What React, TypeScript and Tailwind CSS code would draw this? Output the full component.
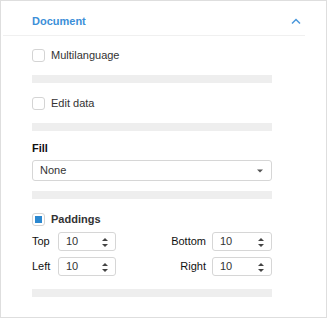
import React from "react";

function Checkbox({ checked }: { checked?: boolean }) {
  return (
    <div className="w-[13px] h-[13px] rounded-[3px] border border-[#d4d4d4] bg-white flex items-center justify-center shrink-0">
      {checked && <div className="w-[7px] h-[7px] bg-[#2b88d0]" />}
    </div>
  );
}

function Bar({ className = "" }: { className?: string }) {
  return <div className={`w-[240px] h-[8px] bg-[#eeeeee] ${className}`} />;
}

function Spin({ value, w }: { value: string; w: string }) {
  return (
    <div className={`${w} h-[19px] rounded-[3px] border border-[#d6d6d6] bg-white flex items-center justify-between pl-[7px] pr-[7px]`}>
      <span className="text-[11px] text-[#333] leading-none">{value}</span>
      <svg width="6" height="11" viewBox="0 0 6 11" className="mt-[1px]">
        <polygon points="3,1 6,4 0,4" fill="#444" />
        <polygon points="0,7 6,7 3,10" fill="#444" />
      </svg>
    </div>
  );
}

export default function App() {
  return (
    <div
      className="w-[327px] h-[318px] border border-[#dedede] bg-white overflow-hidden"
      style={{ fontFamily: '"Liberation Sans", Arial, sans-serif' }}
    >
      <div className="ml-[2px] w-[302px] h-[35px] border-b border-[#f0f0f0] flex items-center justify-between pl-[29px] pr-[4px] pt-[6px]">
        <span className="text-[11px] font-bold text-[#3c8fd8]">Document</span>
        <svg width="10" height="7" viewBox="0 0 10 7">
          <polyline points="1,5.5 5,1.5 9,5.5" fill="none" stroke="#4a98dc" strokeWidth="1.5" />
        </svg>
      </div>
      <div className="pl-[31px] flex flex-col">
        <div className="mt-[13px] h-[13px] flex items-center gap-[6px]">
          <Checkbox />
          <span className="text-[11px] text-[#333] leading-[13px]">Multilanguage</span>
        </div>
        <Bar className="mt-[13px]" />
        <div className="mt-[14px] h-[13px] flex items-center gap-[6px]">
          <Checkbox />
          <span className="text-[11px] text-[#333] leading-[13px]">Edit data</span>
        </div>
        <Bar className="mt-[13px]" />
        <div className="mt-[11px] h-[13px] text-[11px] leading-[13px] font-bold text-[#111]">Fill</div>
        <div className="mt-[5px] w-[240px] h-[21px] rounded-[3px] border border-[#d6d6d6] flex items-center justify-between pl-[7px] pr-[8px]">
          <span className="text-[11px] text-[#333] leading-none">None</span>
          <svg width="6" height="4" viewBox="0 0 6 4">
            <polygon points="0,0.5 6,0.5 3,3.5" fill="#555" />
          </svg>
        </div>
        <Bar className="mt-[10px]" />
        <div className="mt-[14px] h-[13px] flex items-center gap-[6px]">
          <Checkbox checked />
          <span className="text-[11px] font-bold text-[#333] leading-[13px]">Paddings</span>
        </div>
        <div className="mt-[6px] w-[240px] flex items-center justify-between">
          <div className="flex items-center">
            <span className="w-[26px] text-[11px] text-[#111] leading-[13px]">Top</span>
            <Spin value="10" w="w-[58px]" />
          </div>
          <div className="flex items-center gap-[6px]">
            <span className="w-[40px] text-right text-[11px] text-[#111] leading-[13px]">Bottom</span>
            <Spin value="10" w="w-[60px]" />
          </div>
        </div>
        <div className="mt-[6px] w-[240px] flex items-center justify-between">
          <div className="flex items-center">
            <span className="w-[26px] text-[11px] text-[#111] leading-[13px]">Left</span>
            <Spin value="10" w="w-[58px]" />
          </div>
          <div className="flex items-center gap-[6px]">
            <span className="w-[40px] text-right text-[11px] text-[#111] leading-[13px]">Right</span>
            <Spin value="10" w="w-[60px]" />
          </div>
        </div>
        <Bar className="mt-[13px]" />
      </div>
    </div>
  );
}
